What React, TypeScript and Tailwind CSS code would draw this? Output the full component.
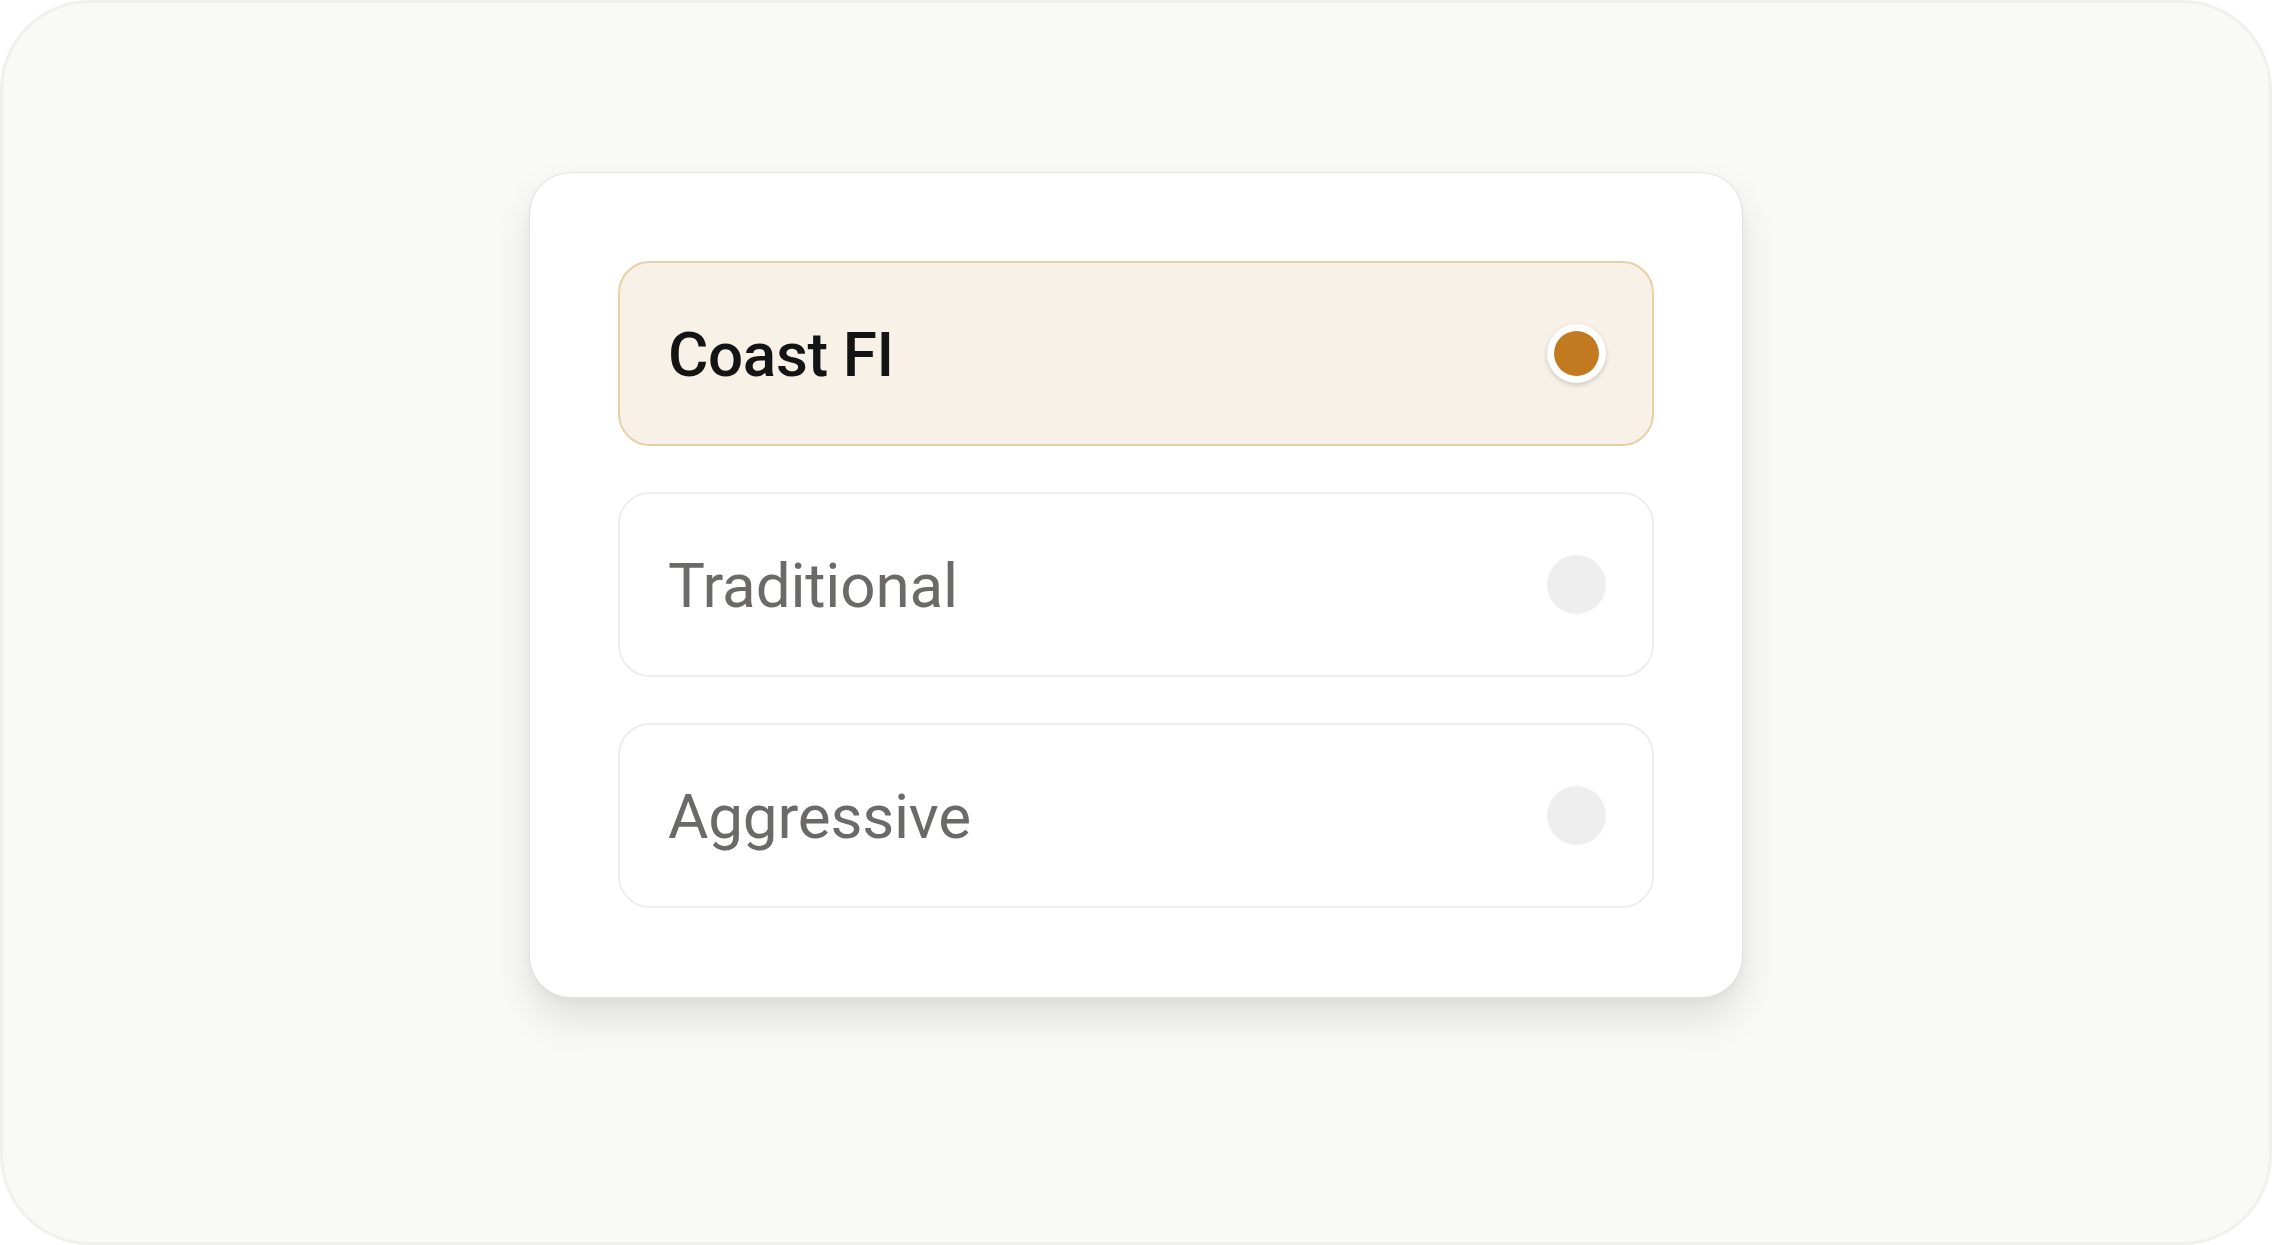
const options = [
  { label: 'Coast FI', selected: true },
  { label: 'Traditional', selected: false },
  { label: 'Aggressive', selected: false },
];

function Option({ label, selected }: { label: string; selected: boolean }) {
  return (
    <div
      className={
        selected
          ? 'flex h-[185px] items-center justify-between rounded-[32px] border-2 border-[#e9cfa6] bg-[#f8f1e8] pl-[48px] pr-[46px]'
          : 'flex h-[185px] items-center justify-between rounded-[32px] border-2 border-[#efeeee] bg-white pl-[48px] pr-[46px]'
      }
    >
      <span
        className={
          selected
            ? 'pt-[2px] text-[62px] font-medium leading-none tracking-[-0.4px] text-[#141414]'
            : 'pt-[2px] text-[62px] font-normal leading-none tracking-[-0.2px] text-[#6b6a69]'
        }
      >
        {label}
      </span>
      {selected ? (
        <span className="flex h-[59px] w-[59px] items-center justify-center rounded-full bg-white shadow-[0_2px_5px_rgba(0,0,0,0.18)]">
          <span className="h-[45px] w-[45px] rounded-full bg-[#c17a1f]" />
        </span>
      ) : (
        <span className="h-[59px] w-[59px] rounded-full bg-[#efeeef]" />
      )}
    </div>
  );
}

export default function App() {
  return (
    <div className="h-[1245px] w-[2272px] bg-white font-['Roboto',sans-serif]">
      <div className="flex h-full w-full justify-center rounded-[90px] border-[3px] border-[#f0f0ee] bg-[#f9f9f8] pt-[169px]">
        <div className="flex h-[826px] w-[1214px] flex-col gap-[46px] rounded-[42px] border border-[#e2e2e0] bg-white p-[88px] shadow-[0_22px_40px_rgba(0,0,0,0.10),0_4px_10px_rgba(0,0,0,0.04)]">
          {options.map((o) => (
            <Option key={o.label} label={o.label} selected={o.selected} />
          ))}
        </div>
      </div>
    </div>
  );
}
